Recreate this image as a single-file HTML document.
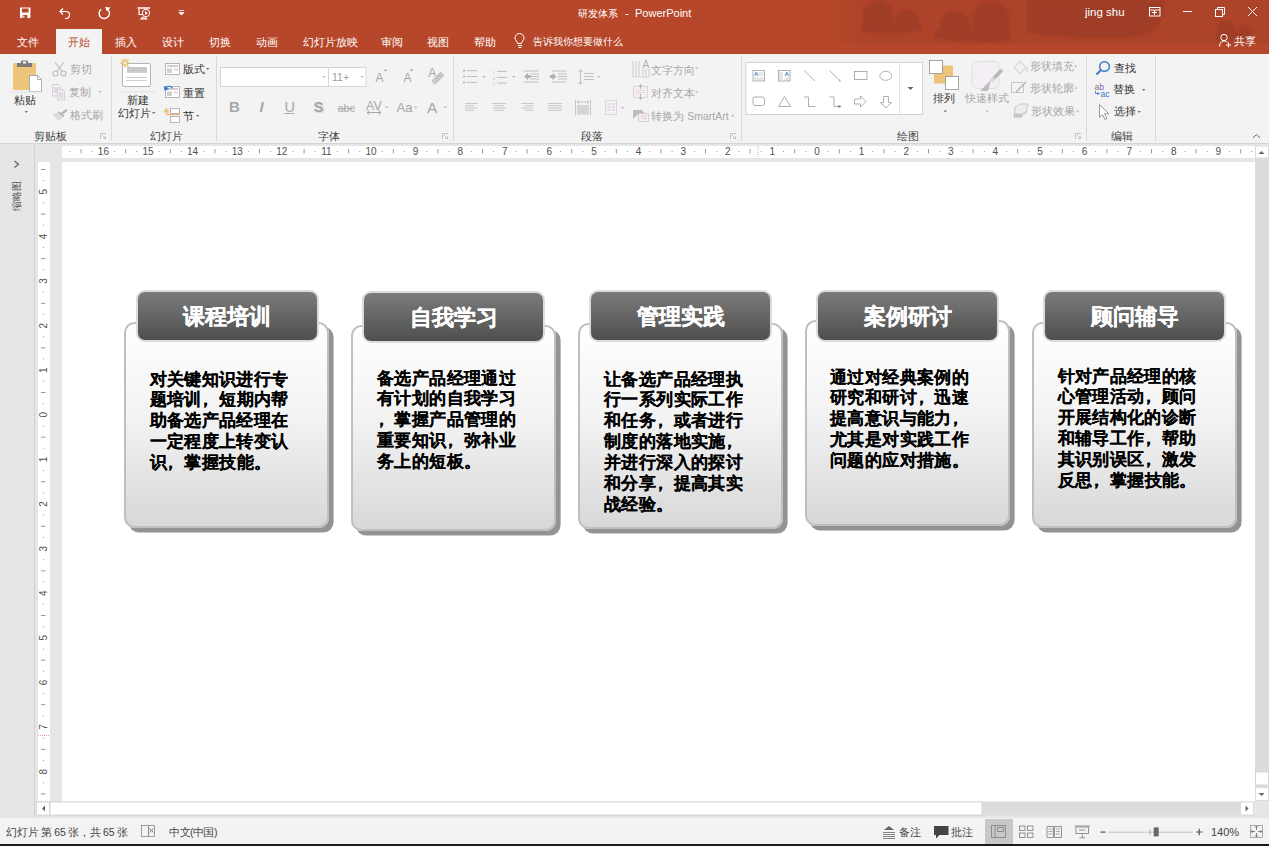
<!DOCTYPE html>
<html><head><meta charset="utf-8">
<style>
*{box-sizing:border-box;margin:0;padding:0}
html,body{width:1269px;height:846px;overflow:hidden;background:#e6e6e6;font-family:"Liberation Sans",sans-serif;}
.a{position:absolute}
.t{position:absolute;white-space:nowrap;line-height:1}
#title{left:0;top:0;width:1269px;height:54px;background:#b7472a;overflow:hidden}
#ribbon{left:0;top:54px;width:1269px;height:90px;background:#f3f3f3;border-bottom:1px solid #d5d5d5}
.w{color:#fff}
.tab{font-size:10.5px;color:#fff;top:36.8px}
.rb{font-size:10.5px;color:#444;margin-top:1.3px}
.dis{color:#a6a6a6}
.glabel{font-size:11px;color:#444;top:129px}
.sep{position:absolute;top:58px;width:1px;height:82px;background:#dadada}
/* cards */
.body{position:absolute;width:205.4px;height:206px;border-radius:10.5px;border:2.4px solid #bfbfbf;background:linear-gradient(#ffffff 0%,#f3f3f3 45%,#d8d8d8 100%);box-shadow:4.6px 4.6px 0 0 #939393}
.head{position:absolute;width:183px;height:52px;border-radius:9px;border:2.3px solid #dcdcdc;background:linear-gradient(#7b7b7b,#4f4f4f);color:#fff;font-weight:bold;font-size:22px;text-align:center;line-height:49px;-webkit-text-stroke:0.25px #fff}
.cm{position:relative;left:-4.5px}
.txt{position:absolute;font-weight:bold;font-size:17.3px;line-height:20.9px;color:#000;white-space:nowrap;-webkit-text-stroke:0.08px #000;letter-spacing:0.4px}
</style></head><body>
<!-- title bar -->
<div id="title" class="a">
<svg class="a" style="left:0;top:0" width="1269" height="54">
<defs><filter id="bl" x="-10%" y="-10%" width="120%" height="120%"><feGaussianBlur stdDeviation="1.2"/></filter><linearGradient id="tb" x1="0" x2="1"><stop offset="0" stop-color="#b7472a"/><stop offset="0.12" stop-color="#ad4329"/><stop offset="1" stop-color="#ad4329"/></linearGradient></defs>
<rect x="820" y="0" width="449" height="44" fill="url(#tb)"/>
<g fill="#a03c25" filter="url(#bl)">
<circle cx="878" cy="16" r="15"/><circle cx="907" cy="21" r="11"/><path d="M862 22h59v9c-20 2-40 2-59 1z"/>
<circle cx="955" cy="26" r="15"/><circle cx="991" cy="20" r="19"/><path d="M935 30h75v11c-25 1-55 1-75-3z"/>
<path d="M1027 0h137c2 10-2 22-10 30c-10 8-30 8-50 8c-30 0-55-1-77-6z"/><circle cx="1226" cy="30" r="9"/><circle cx="1246" cy="32" r="6.5"/><path d="M1216 31h37v9h-37z"/>
</g>
<rect x="0" y="44" width="1269" height="10" fill="#b7472a"/>
<g fill="none" stroke="#fff" stroke-width="1.2">
<path d="M20 7.5h10.4v10.6h-10.4zM21.9 8.4v4.2h6.7v-4.2zM22.6 15v3.1h4.7v-3.1z" fill="#fff" fill-rule="evenodd" stroke="none"/>
<rect x="23.2" y="15.7" width="1.2" height="1.8" fill="#fff" stroke="none"/>
<path d="M60 11.5h6a3.5 3.5 0 0 1 0 7h-1"/><path d="M63 8.5l-3 3 3 3"/>
<path d="M101.2 9.2a5.2 5.2 0 1 0 5.2 -0.6" stroke-width="1.4"/>
<path d="M137.5 8h12.5" stroke-width="1.5"/><path d="M139 9v5.5h4"/><path d="M143.5 16.8l-2.3 2h5.3l-1.8-2"/>
</g>
<circle cx="146" cy="13" r="3.7" fill="#b7472a" stroke="#fff" stroke-width="1"/><path d="M145 11l3 2-3 2z" fill="#fff"/><path d="M105 7l5.5 0.5-3.5 4z" fill="#fff"/>
<path d="M179 10.5h5M179 12.5h5l-2.5 2.5z" fill="#fff" stroke="#fff" stroke-width="0.8"/>
<g fill="none" stroke="#fff" stroke-width="1">
<rect x="1149.5" y="7.5" width="10.5" height="8.5"/><path d="M1149.5 10h10.5M1152 12.5h5M1154.5 10v5"/>
<path d="M1183 11.5h9"/>
<rect x="1215.5" y="9.5" width="7" height="7"/><path d="M1217.5 9.5v-2h7v7h-2"/>
<path d="M1248 7l9 9M1257 7l-9 9"/>
<circle cx="1224" cy="37.5" r="3.2"/><path d="M1219.5 46.5c0-3.5 2-5.5 4.5-5.5s3 1 3.5 1.5"/><path d="M1228.5 42.5v5M1226 45h5"/>
</g>
</svg>
<div class="t w" style="left:577.5px;top:8.6px;font-size:10px">研发体系</div><div class="t w" style="left:625px;top:8px;font-size:11px">-</div><div class="t w" style="left:635px;top:8px;font-size:11px">PowerPoint</div>
<div class="t w" style="left:1085px;top:6.5px;font-size:11.5px">jing shu</div>
<div class="t tab" style="left:17px">文件</div>
<div class="a" style="left:56px;top:29px;width:46px;height:25px;background:#f3f3f3"></div>
<div class="t tab" style="left:68px;color:#b7472a">开始</div>
<div class="t tab" style="left:115px">插入</div>
<div class="t tab" style="left:162px">设计</div>
<div class="t tab" style="left:209px">切换</div>
<div class="t tab" style="left:256px">动画</div>
<div class="t tab" style="left:303px">幻灯片放映</div>
<div class="t tab" style="left:381px">审阅</div>
<div class="t tab" style="left:427px">视图</div>
<div class="t tab" style="left:474px">帮助</div>
<svg class="a" style="left:513px;top:33px" width="14" height="16"><path d="M4.5 10.5c0-2-2.5-3-2.5-5.5a4.5 4.5 0 0 1 9 0c0 2.5-2.5 3.5-2.5 5.5zM5 12.5h4M5.5 14.5h3" fill="none" stroke="#fff" stroke-width="1"/></svg>
<div class="t tab" style="left:533px;font-size:10px;margin-top:0.3px">告诉我你想要做什么</div>
<div class="t tab" style="left:1234px;margin-top:-1px">共享</div>
</div>
<!-- ribbon -->
<div id="ribbon" class="a"></div>
<svg class="a" style="left:0;top:0" width="1269" height="145">
<!-- font boxes -->
<rect x="220.5" y="67.5" width="108" height="19" fill="#fff" stroke="#d6d6d6" stroke-width="1"/>
<rect x="328.5" y="67.5" width="37.5" height="19" fill="#fff" stroke="#d6d6d6" stroke-width="1"/>
<!-- separators -->
<g fill="#dadada"><rect x="111" y="56" width="1" height="85"/><rect x="216" y="56" width="1" height="85"/><rect x="453" y="56" width="1" height="85"/><rect x="741" y="56" width="1" height="85"/><rect x="1086" y="56" width="1" height="85"/><rect x="1155" y="56" width="1" height="85"/></g>
<!-- launchers -->
<g fill="none" stroke="#b5b5b5" stroke-width="0.8"><path d="M100.5 139v-5.5h5.5M102 135l3.5 3.5M103.5 138.5h2v-2"/><path d="M442.5 139v-5.5h5.5M444 135l3.5 3.5M445.5 138.5h2v-2"/><path d="M730.5 139v-5.5h5.5M732 135l3.5 3.5M733.5 138.5h2v-2"/><path d="M1075.5 139v-5.5h5.5M1077 135l3.5 3.5M1078.5 138.5h2v-2"/></g>
<!-- paste -->
<rect x="13" y="63" width="23" height="27" rx="1.5" fill="#ecc57a"/>
<path d="M17 67v-4h4v-1.5a1 1 0 0 1 1-1h5a1 1 0 0 1 1 1v1.5h4v4z" fill="#7b7b7b"/><rect x="23" y="61.5" width="3" height="2" fill="#fff"/>
<path d="M29.5 75.5h8l4 4v12h-12z" fill="#fff" stroke="#9a9a9a" stroke-width="0.8"/><path d="M37.5 75.5v4h4" fill="none" stroke="#9a9a9a" stroke-width="0.8"/>
<rect x="6" y="91.5" width="37" height="0.8" fill="#e0e0e0"/>
<!-- scissors -->
<g fill="none" stroke="#bdbdbd" stroke-width="1.1"><circle cx="55.5" cy="73.5" r="2.5"/><circle cx="63.5" cy="73.5" r="2.5"/><path d="M57 71.5l7-9.5M62 71.5l-7-9.5"/></g>
<!-- copy -->
<g fill="#f1edf1" stroke="#d0c8d0" stroke-width="0.8"><path d="M52.5 84.5h6l1.5 1.5v10h-7.5z"/><path d="M57.5 89.5h5.5l1.5 1.5v9h-7z"/></g>
<g stroke="#c8c0c8" stroke-width="0.8"><path d="M54 88h4M54 90h4M54 92h3M59 93h4M59 95h4M59 97h4"/></g>
<!-- brush -->
<path d="M52.7 114.4l6.2-2.4 4.7 4.3-5.2 4.7z" fill="#dcd8dc"/><path d="M58.9 112l4.7 4.3" stroke="#b0aeb0" stroke-width="1.6"/><path d="M61.8 113.8l4.3-3.4" stroke="#b8b6b8" stroke-width="2.4" stroke-linecap="round"/>
<!-- new slide -->
<rect x="122.5" y="63.5" width="28" height="23" rx="1.5" fill="#fff" stroke="#ababab" stroke-width="0.9"/>
<rect x="127" y="67" width="20" height="5.8" fill="#c9c9c9"/>
<path d="M126 77.5h21M126 80.5h21" stroke="#c3c3c3" stroke-width="0.8"/>
<g stroke="#ebb55a" stroke-width="1.1"><path d="M125 58v10M120 63h10M121.5 59.5l7 7M128.5 59.5l-7 7"/></g><circle cx="125" cy="63" r="2.2" fill="#f3f3f3" stroke="#ebb55a" stroke-width="1"/>
<rect x="118" y="91.5" width="37" height="0.8" fill="#e0e0e0"/>
<!-- layout icon -->
<rect x="165.5" y="63.5" width="14" height="11" fill="#fff" stroke="#a6a6a6" stroke-width="0.8"/><rect x="167" y="65" width="11" height="2" fill="#cfcfcf"/><rect x="167" y="68.5" width="5" height="4.5" fill="#cfcfcf"/><rect x="173.5" y="68.5" width="4.5" height="2" fill="#dedede"/>
<!-- reset icon -->
<rect x="165.5" y="86.5" width="14" height="11" fill="#fff" stroke="#a6a6a6" stroke-width="0.8"/><rect x="167" y="88" width="11" height="2" fill="#cfcfcf"/><rect x="167" y="91.5" width="5" height="4.5" fill="#cfcfcf"/><rect x="173.5" y="91.5" width="4.5" height="2" fill="#dedede"/>
<path d="M164.5 89.5a4.5 4 0 0 1 8 -1.5" fill="none" stroke="#3a7dc9" stroke-width="1.4"/><path d="M163.5 86l1.5 5 4-2.5z" fill="#3a7dc9"/>
<!-- section icon -->
<rect x="170.5" y="108.5" width="9" height="5" fill="#fff" stroke="#a6a6a6" stroke-width="0.8"/><rect x="170.5" y="116.5" width="9" height="6" fill="#fff" stroke="#a6a6a6" stroke-width="0.8"/>
<path d="M166 114.5h14" stroke="#f0b070" stroke-width="1.2"/><g stroke="#ebb55a" stroke-width="0.9"><path d="M166.5 108v6M163.5 111h6M164.5 109l4 4M168.5 109l-4 4"/></g>
<!-- dropdown arrows -->
<g fill="#777"><path d="M24.5 111h3.5l-1.75 2z"/><path d="M98.5 91h3.5l-1.75 2z" fill="#bbb"/><path d="M152 112h3.5l-1.75 2z"/><path d="M206 68h3.5l-1.75 2z"/><path d="M196 115h3.5l-1.75 2z"/>
<path d="M943.5 110.5h3.5l-1.75 2z"/><path d="M1142 89h3.5l-1.75 2z"/><path d="M1137.5 111h3.5l-1.75 2z"/></g>
<g fill="#bcbcbc"><path d="M322.5 76h3.5l-1.75 2z"/><path d="M360.5 76h3.5l-1.75 2z"/><path d="M385 106.5h3.5l-1.75 2z"/><path d="M414 106.5h3.5l-1.75 2z"/><path d="M443.5 106.5h3.5l-1.75 2z"/>
<path d="M482 76h3.5l-1.75 2z"/><path d="M512 76h3.5l-1.75 2z"/><path d="M597 76h3.5l-1.75 2z"/><path d="M621 107h3.5l-1.75 2z"/>
<path d="M695 67.5h3.5l-1.75 2z"/><path d="M695 91.5h3.5l-1.75 2z"/><path d="M731 115h3.5l-1.75 2z"/>
<path d="M985.5 110.5h3.5l-1.75 2z"/><path d="M1074 65.5h3.5l-1.75 2z"/><path d="M1074 87.5h3.5l-1.75 2z"/><path d="M1076 110.5h3.5l-1.75 2z"/></g>
</svg>
<!-- ribbon texts -->
<div class="t rb" style="left:14px;top:93.5px;color:#333">粘贴</div>
<div class="t rb dis" style="left:70px;top:63px">剪切</div>
<div class="t rb dis" style="left:69px;top:86px">复制</div>
<div class="t rb dis" style="left:70px;top:109px">格式刷</div>
<div class="t rb" style="left:34px;top:129.5px">剪贴板</div>
<div class="t rb" style="left:127px;top:93.5px;color:#333">新建</div>
<div class="t rb" style="left:118px;top:106.5px;color:#333">幻灯片</div>
<div class="t rb" style="left:182.5px;top:62.5px;color:#333">版式</div>
<div class="t rb" style="left:182.5px;top:86.5px;color:#333">重置</div>
<div class="t rb" style="left:182.5px;top:109.5px;color:#333">节</div>
<div class="t rb" style="left:149.5px;top:129.5px">幻灯片</div>
<div class="t rb" style="left:318px;top:129.5px">字体</div>
<div class="t rb" style="left:581px;top:129.5px">段落</div>
<div class="t rb" style="left:897px;top:129.5px">绘图</div>
<div class="t rb" style="left:1110.5px;top:129.5px">编辑</div>


<!-- ribbon part 2 -->
<svg class="a" style="left:0;top:0" width="1269" height="145">
<!-- font group -->
<g fill="#a6a6a6" font-family="Liberation Sans" >
<text x="229" y="112" font-size="15" font-weight="bold">B</text>
<text x="259.5" y="112" font-size="15" font-style="italic" font-weight="bold">I</text>
<text x="284.5" y="112" font-size="14.5">U</text><rect x="284.5" y="113" width="10" height="0.9"/>
<text x="314.5" y="113" font-size="15" font-weight="bold" fill="#d6d6d6">S</text><text x="313.5" y="112" font-size="15" font-weight="bold">S</text>
<text x="337.5" y="112" font-size="11">abc</text><rect x="337.5" y="108.3" width="17" height="0.9"/>
<text x="366" y="110" font-size="12.5">AV</text>
<text x="396.5" y="112" font-size="13">Aa</text>
<text x="427" y="112.6" font-size="15.5">A</text>
<text x="375.5" y="82" font-size="12">A</text><path d="M383.5 71l2-2 2 2z"/>
<text x="403.5" y="82" font-size="12">A</text><path d="M409.5 69.5h4l-2 2z"/>
<text x="428.3" y="77.3" font-size="12">A</text>
<text x="332" y="80.7" font-size="10.5" fill="#a0a0a0">11+</text>
</g>
<path d="M367 112.5h14M369.5 110.5l-2.5 2 2.5 2M378.5 110.5l2.5 2-2.5 2" fill="none" stroke="#a6a6a6" stroke-width="1"/>
<path d="M440.5 71.3l4.3 4.2-9.8 9.7-4.2-4.2z" fill="#c6c4c6" stroke="#f3f3f3" stroke-width="0.8"/><path d="M432.7 79.2l4 3.6" stroke="#e2e0e2" stroke-width="0.8"/>
<!-- paragraph group -->
<g fill="#b0b0b0"><circle cx="464" cy="70.7" r="1"/><circle cx="464" cy="76.5" r="1"/><circle cx="464" cy="82.4" r="1"/></g>
<g stroke="#b8b8b8" stroke-width="0.9"><path d="M466.5 70.7h10.5M466.5 76.5h10.5M466.5 82.4h10.5"/><path d="M497 71.4h10M497 77.4h10M497 83.1h10"/></g>
<g fill="#b0b0b0" font-family="Liberation Serif" font-size="5"><text x="492.5" y="73.5">1</text><text x="492.5" y="79.5">2</text><text x="492.5" y="85.2">3</text></g>
<g stroke="#bcbcbc" stroke-width="0.9" fill="none"><path d="M523.5 71h15M530 74h9M530 76.5h9M530 79h9M523.5 82h15"/><path d="M551.5 71h15M558 74h9M558 76.5h9M558 79h9M551.5 82h15"/>
<path d="M580.5 70v14M578.5 72l2-2.5 2 2.5M578.5 82l2 2.5 2-2.5M584 73.5h10M584 76.5h10M584 79.5h10"/></g>
<path d="M524 76.5l4-3.5v2h2.5v3h-2.5v2z" fill="#b0b0b0"/><path d="M556.5 76.5l-4-3.5v2h-2.5v3h2.5v2z" fill="#b0b0b0"/>
<g stroke="#c3c3c3" stroke-width="0.9"><path d="M465 103.5h12.5M465 105.8h9M465 108.1h12.5M465 110.4h9"/><path d="M492 103.5h14M494 105.8h10M492 108.1h14M494 110.4h10"/><path d="M521 103.5h12.5M524.5 105.8h9M521 108.1h12.5M524.5 110.4h9"/><path d="M548 103.5h14M548 105.8h14M548 108.1h14M548 110.4h14"/></g>
<g stroke="#c0c0c0" stroke-width="0.9" fill="none"><path d="M575.5 100v15.5M590.5 100v15.5M577 102h12M579 100.5l-2 1.5 2 1.5M587 100.5l2 1.5-2 1.5"/></g>
<rect x="577" y="105" width="12" height="9.5" fill="#d5d5d5"/>
<rect x="605.5" y="100.5" width="11" height="14" fill="#f5f0f5" stroke="#d8d0d8" stroke-width="0.8"/><path d="M607.5 104h3M612 104h3M607.5 107h3M612 107h3M607.5 110h3M612 110h3" stroke="#cfc8cf" stroke-width="1.2"/>
<g stroke="#bdbdbd" stroke-width="0.7" fill="none"><path d="M633 61v16M636 61v16M639 61v16M643 68.5v8.5M646 68.5v8.5M649 68.5v8.5"/><path d="M632.5 77h17" stroke-dasharray="1.2 1.2" stroke-width="0.9"/></g>
<text x="642.5" y="68" font-size="10" fill="#b0b0b0" font-family="Liberation Sans">A</text>
<rect x="633.5" y="86.5" width="14" height="11" fill="#f5eff5" stroke="#d6cdd6" stroke-width="0.8"/><path d="M636 90.5h9M636 92.5h9" stroke="#dcd2dc" stroke-width="0.9"/><path d="M640.5 84.5v4.5M640.5 94v5.5M638.6 86.5l1.9-2 1.9 2M638.6 97.3l1.9 2 1.9-2" fill="none" stroke="#b0b0b0" stroke-width="0.9"/>
<path d="M633 110h9l4 5h-9l-4 4z" fill="#bdbdbd"/><rect x="638.5" y="113.5" width="10" height="8" fill="#f5eff5" stroke="#d0c8d0" stroke-width="0.8"/><path d="M641 116h6M641 118.5h6" stroke="#d0c8d0" stroke-width="0.8"/>
<!-- drawing gallery -->
<rect x="746" y="62.5" width="176.5" height="52" fill="#fff" stroke="#d4d4d4" stroke-width="1"/>
<rect x="899" y="63" width="0.9" height="51" fill="#e4e4e4"/><path d="M907.5 87h6l-3 3z" fill="#666"/>
<g fill="none" stroke="#9c9c9c" stroke-width="0.8">
<rect x="753" y="70.5" width="11.5" height="10.5" stroke="#a0a0a0"/><rect x="778.5" y="70.5" width="11.5" height="10.5"/>
<path d="M804 70.5l11 10.5M829.5 70.5l11 10.5"/>
<rect x="854.5" y="71.5" width="12.5" height="8"/><ellipse cx="885.8" cy="75.8" rx="6" ry="4.5"/>
<rect x="753" y="97" width="11.5" height="8.5" rx="2"/><path d="M784.5 96.5l-6 10h12z"/>
<path d="M804 97h4.5v9.5h7M829.5 97h4.5v9.5h6.5"/>
<path d="M854.5 99h6v-3l5.5 5.5-5.5 5.5v-3h-6z"/><path d="M883.5 96.5v6h-3l5.5 5.5 5.5-5.5h-3v-6z"/>
</g>
<g fill="#777"><path d="M838.5 80l2.5 1.2-1.2 0.3z"/><path d="M838.5 105l3 1.5-3 1.5z"/></g>
<g fill="#3f7fd0" font-family="Liberation Sans" font-weight="bold" font-size="6"><text x="754" y="76">A</text><text x="784.5" y="76">A</text></g>
<g stroke="#c8c8c8" stroke-width="0.9"><path d="M758.5 73h5M758.5 75h5M754 78h10M754 80h10M780 72v8M782 72v8M784.5 78h5M784.5 80h5"/></g>
<!-- arrange -->
<rect x="934" y="65.5" width="19" height="18" fill="#edc47a"/>
<rect x="929.5" y="60.5" width="13" height="13" fill="#fff" stroke="#8f8f8f" stroke-width="0.8"/>
<rect x="945.5" y="76.5" width="13" height="13" fill="#fff" stroke="#8f8f8f" stroke-width="0.8"/>
<!-- quick styles -->
<rect x="972" y="61.5" width="27" height="27" rx="5" fill="#f3eff4" stroke="#ddd5de" stroke-width="0.8"/>
<path d="M1002 70l-8 8" stroke="#b9b9b9" stroke-width="3.5"/><path d="M994 78l-3 3" stroke="#d8d4d8" stroke-width="3.5"/><path d="M991 80l-11 11h8z" fill="#bdbdbd"/>
<!-- shape fill/outline/effect -->
<g fill="none" stroke="#c0c0c0" stroke-width="0.9"><path d="M1020 61.5l6 6-6 6-6-6z"/><path d="M1027 67v5"/><path d="M1011.5 82.5h12M1011.5 82.5v10h12v-8"/></g>
<path d="M1026 82l-10 10" stroke="#b5b5b5" stroke-width="1.4"/>
<path d="M1015 107l5-3h8l-2 9-5 4h-7z" fill="#f0ebf0" stroke="#c0bcc0" stroke-width="0.8"/><path d="M1014 114h8l5-3" fill="none" stroke="#c0bcc0" stroke-width="0.8"/><path d="M1014 114h8v3.5h-8z" fill="#c6c6c6"/>
<!-- edit -->
<circle cx="1104.5" cy="66.5" r="4.8" fill="none" stroke="#3b7bc8" stroke-width="1.5"/><path d="M1101 70l-4.5 4.5" stroke="#3b7bc8" stroke-width="2"/>
<g font-family="Liberation Sans" font-size="8.5"><text x="1094.5" y="89.8" fill="#7b7b7b">a</text><text x="1099.3" y="89.8" fill="#8e54b8">b</text><text x="1100.5" y="96.5" fill="#3b7bc8">ac</text></g>
<path d="M1095.5 91v2.5h3.5M1097.5 92l1.5 1.5-1.5 1.5" fill="none" stroke="#3b7bc8" stroke-width="0.9"/>
<path d="M1099.5 104.5v13l3-3 2.5 5 2-1-2.5-4.8h4.2z" fill="#fff" stroke="#808080" stroke-width="0.8"/>
<path d="M1253 138l3.5-3.5 3.5 3.5" fill="none" stroke="#666" stroke-width="1"/>
</svg>
<div class="t rb dis" style="left:651.3px;top:63.3px">文字方向</div>
<div class="t rb dis" style="left:651.3px;top:86.4px">对齐文本</div>
<div class="t rb dis" style="left:651.3px;top:110px">转换为 SmartArt</div>
<div class="t rb" style="left:933.4px;top:92.2px;color:#333">排列</div>
<div class="t rb dis" style="left:965px;top:92.2px">快速样式</div>
<div class="t rb dis" style="left:1029.8px;top:60px">形状填充</div>
<div class="t rb dis" style="left:1029.8px;top:82.1px">形状轮廓</div>
<div class="t rb dis" style="left:1031.2px;top:104.9px">形状效果</div>
<div class="t rb" style="left:1114px;top:61.7px;color:#333">查找</div>
<div class="t rb" style="left:1113px;top:83px;color:#333">替换</div>
<div class="t rb" style="left:1114px;top:105px;color:#333">选择</div>
<!-- left pane -->
<div class="a" style="left:0;top:144px;width:1269px;height:674px;background:#e6e6e6"></div>
<div class="a" style="left:34px;top:144px;width:1px;height:674px;background:#d2d2d2"></div>
<div class="a" style="left:62px;top:146px;width:1193px;height:12.2px;background:#fff"></div>
<div class="a" style="left:37.7px;top:162px;width:12.3px;height:639px;background:#fff"></div>
<div class="a" style="left:62px;top:162px;width:1193px;height:639.5px;background:#fff"></div>
<svg class="a" style="left:0;top:0" width="1269" height="846">
<g font-family="Liberation Sans" font-size="10" fill="#505050">
<rect x="69.4" y="151" width="1" height="1" fill="#999"/>
<rect x="80.6" y="149" width="1" height="4.5" fill="#999"/>
<rect x="91.7" y="151" width="1" height="1" fill="#999"/>
<text x="103.4" y="155" text-anchor="middle">16</text>
<rect x="114.0" y="151" width="1" height="1" fill="#999"/>
<rect x="125.2" y="149" width="1" height="4.5" fill="#999"/>
<rect x="136.3" y="151" width="1" height="1" fill="#999"/>
<text x="148.0" y="155" text-anchor="middle">15</text>
<rect x="158.7" y="151" width="1" height="1" fill="#999"/>
<rect x="169.8" y="149" width="1" height="4.5" fill="#999"/>
<rect x="180.9" y="151" width="1" height="1" fill="#999"/>
<text x="192.6" y="155" text-anchor="middle">14</text>
<rect x="203.3" y="151" width="1" height="1" fill="#999"/>
<rect x="214.4" y="149" width="1" height="4.5" fill="#999"/>
<rect x="225.6" y="151" width="1" height="1" fill="#999"/>
<text x="237.2" y="155" text-anchor="middle">13</text>
<rect x="247.8" y="151" width="1" height="1" fill="#999"/>
<rect x="259.0" y="149" width="1" height="4.5" fill="#999"/>
<rect x="270.1" y="151" width="1" height="1" fill="#999"/>
<text x="281.8" y="155" text-anchor="middle">12</text>
<rect x="292.4" y="151" width="1" height="1" fill="#999"/>
<rect x="303.6" y="149" width="1" height="4.5" fill="#999"/>
<rect x="314.7" y="151" width="1" height="1" fill="#999"/>
<text x="326.4" y="155" text-anchor="middle">11</text>
<rect x="337.0" y="151" width="1" height="1" fill="#999"/>
<rect x="348.2" y="149" width="1" height="4.5" fill="#999"/>
<rect x="359.3" y="151" width="1" height="1" fill="#999"/>
<text x="371.0" y="155" text-anchor="middle">10</text>
<rect x="381.6" y="151" width="1" height="1" fill="#999"/>
<rect x="392.8" y="149" width="1" height="4.5" fill="#999"/>
<rect x="403.9" y="151" width="1" height="1" fill="#999"/>
<text x="415.6" y="155" text-anchor="middle">9</text>
<rect x="426.2" y="151" width="1" height="1" fill="#999"/>
<rect x="437.4" y="149" width="1" height="4.5" fill="#999"/>
<rect x="448.5" y="151" width="1" height="1" fill="#999"/>
<text x="460.2" y="155" text-anchor="middle">8</text>
<rect x="470.8" y="151" width="1" height="1" fill="#999"/>
<rect x="482.0" y="149" width="1" height="4.5" fill="#999"/>
<rect x="493.1" y="151" width="1" height="1" fill="#999"/>
<text x="504.8" y="155" text-anchor="middle">7</text>
<rect x="515.5" y="151" width="1" height="1" fill="#999"/>
<rect x="526.6" y="149" width="1" height="4.5" fill="#999"/>
<rect x="537.8" y="151" width="1" height="1" fill="#999"/>
<text x="549.4" y="155" text-anchor="middle">6</text>
<rect x="560.0" y="151" width="1" height="1" fill="#999"/>
<rect x="571.2" y="149" width="1" height="4.5" fill="#999"/>
<rect x="582.4" y="151" width="1" height="1" fill="#999"/>
<text x="594.0" y="155" text-anchor="middle">5</text>
<rect x="604.6" y="151" width="1" height="1" fill="#999"/>
<rect x="615.8" y="149" width="1" height="4.5" fill="#999"/>
<rect x="627.0" y="151" width="1" height="1" fill="#999"/>
<text x="638.6" y="155" text-anchor="middle">4</text>
<rect x="649.2" y="151" width="1" height="1" fill="#999"/>
<rect x="660.4" y="149" width="1" height="4.5" fill="#999"/>
<rect x="671.6" y="151" width="1" height="1" fill="#999"/>
<text x="683.2" y="155" text-anchor="middle">3</text>
<rect x="693.9" y="151" width="1" height="1" fill="#999"/>
<rect x="705.0" y="149" width="1" height="4.5" fill="#999"/>
<rect x="716.2" y="151" width="1" height="1" fill="#999"/>
<text x="727.8" y="155" text-anchor="middle">2</text>
<rect x="738.4" y="151" width="1" height="1" fill="#999"/>
<rect x="749.6" y="149" width="1" height="4.5" fill="#999"/>
<rect x="760.8" y="151" width="1" height="1" fill="#999"/>
<text x="772.4" y="155" text-anchor="middle">1</text>
<rect x="783.0" y="151" width="1" height="1" fill="#999"/>
<rect x="794.2" y="149" width="1" height="4.5" fill="#999"/>
<rect x="805.4" y="151" width="1" height="1" fill="#999"/>
<text x="817.0" y="155" text-anchor="middle">0</text>
<rect x="827.6" y="151" width="1" height="1" fill="#999"/>
<rect x="838.8" y="149" width="1" height="4.5" fill="#999"/>
<rect x="850.0" y="151" width="1" height="1" fill="#999"/>
<text x="861.6" y="155" text-anchor="middle">1</text>
<rect x="872.2" y="151" width="1" height="1" fill="#999"/>
<rect x="883.4" y="149" width="1" height="4.5" fill="#999"/>
<rect x="894.6" y="151" width="1" height="1" fill="#999"/>
<text x="906.2" y="155" text-anchor="middle">2</text>
<rect x="916.9" y="151" width="1" height="1" fill="#999"/>
<rect x="928.0" y="149" width="1" height="4.5" fill="#999"/>
<rect x="939.2" y="151" width="1" height="1" fill="#999"/>
<text x="950.8" y="155" text-anchor="middle">3</text>
<rect x="961.4" y="151" width="1" height="1" fill="#999"/>
<rect x="972.6" y="149" width="1" height="4.5" fill="#999"/>
<rect x="983.8" y="151" width="1" height="1" fill="#999"/>
<text x="995.4" y="155" text-anchor="middle">4</text>
<rect x="1006.0" y="151" width="1" height="1" fill="#999"/>
<rect x="1017.2" y="149" width="1" height="4.5" fill="#999"/>
<rect x="1028.3" y="151" width="1" height="1" fill="#999"/>
<text x="1040.0" y="155" text-anchor="middle">5</text>
<rect x="1050.7" y="151" width="1" height="1" fill="#999"/>
<rect x="1061.8" y="149" width="1" height="4.5" fill="#999"/>
<rect x="1073.0" y="151" width="1" height="1" fill="#999"/>
<text x="1084.6" y="155" text-anchor="middle">6</text>
<rect x="1095.2" y="151" width="1" height="1" fill="#999"/>
<rect x="1106.4" y="149" width="1" height="4.5" fill="#999"/>
<rect x="1117.5" y="151" width="1" height="1" fill="#999"/>
<text x="1129.2" y="155" text-anchor="middle">7</text>
<rect x="1139.9" y="151" width="1" height="1" fill="#999"/>
<rect x="1151.0" y="149" width="1" height="4.5" fill="#999"/>
<rect x="1162.2" y="151" width="1" height="1" fill="#999"/>
<text x="1173.8" y="155" text-anchor="middle">8</text>
<rect x="1184.5" y="151" width="1" height="1" fill="#999"/>
<rect x="1195.6" y="149" width="1" height="4.5" fill="#999"/>
<rect x="1206.8" y="151" width="1" height="1" fill="#999"/>
<text x="1218.4" y="155" text-anchor="middle">9</text>
<rect x="1229.1" y="151" width="1" height="1" fill="#999"/>
<rect x="1240.2" y="149" width="1" height="4.5" fill="#999"/>
<rect x="1251.4" y="151" width="1" height="1" fill="#999"/>
<rect x="41" y="169.0" width="4.5" height="1" fill="#999"/>
<rect x="43" y="180.1" width="1" height="1" fill="#999"/>
<text x="0" y="0" text-anchor="middle" transform="translate(47.3 191.8) rotate(-90)">5</text>
<rect x="43" y="202.4" width="1" height="1" fill="#999"/>
<rect x="41" y="213.6" width="4.5" height="1" fill="#999"/>
<rect x="43" y="224.7" width="1" height="1" fill="#999"/>
<text x="0" y="0" text-anchor="middle" transform="translate(47.3 236.4) rotate(-90)">4</text>
<rect x="43" y="247.0" width="1" height="1" fill="#999"/>
<rect x="41" y="258.2" width="4.5" height="1" fill="#999"/>
<rect x="43" y="269.4" width="1" height="1" fill="#999"/>
<text x="0" y="0" text-anchor="middle" transform="translate(47.3 281.0) rotate(-90)">3</text>
<rect x="43" y="291.6" width="1" height="1" fill="#999"/>
<rect x="41" y="302.8" width="4.5" height="1" fill="#999"/>
<rect x="43" y="313.9" width="1" height="1" fill="#999"/>
<text x="0" y="0" text-anchor="middle" transform="translate(47.3 325.6) rotate(-90)">2</text>
<rect x="43" y="336.2" width="1" height="1" fill="#999"/>
<rect x="41" y="347.4" width="4.5" height="1" fill="#999"/>
<rect x="43" y="358.5" width="1" height="1" fill="#999"/>
<text x="0" y="0" text-anchor="middle" transform="translate(47.3 370.2) rotate(-90)">1</text>
<rect x="43" y="380.8" width="1" height="1" fill="#999"/>
<rect x="41" y="392.0" width="4.5" height="1" fill="#999"/>
<rect x="43" y="403.1" width="1" height="1" fill="#999"/>
<text x="0" y="0" text-anchor="middle" transform="translate(47.3 414.8) rotate(-90)">0</text>
<rect x="43" y="425.4" width="1" height="1" fill="#999"/>
<rect x="41" y="436.6" width="4.5" height="1" fill="#999"/>
<rect x="43" y="447.7" width="1" height="1" fill="#999"/>
<text x="0" y="0" text-anchor="middle" transform="translate(47.3 459.4) rotate(-90)">1</text>
<rect x="43" y="470.0" width="1" height="1" fill="#999"/>
<rect x="41" y="481.2" width="4.5" height="1" fill="#999"/>
<rect x="43" y="492.4" width="1" height="1" fill="#999"/>
<text x="0" y="0" text-anchor="middle" transform="translate(47.3 504.0) rotate(-90)">2</text>
<rect x="43" y="514.6" width="1" height="1" fill="#999"/>
<rect x="41" y="525.8" width="4.5" height="1" fill="#999"/>
<rect x="43" y="537.0" width="1" height="1" fill="#999"/>
<text x="0" y="0" text-anchor="middle" transform="translate(47.3 548.6) rotate(-90)">3</text>
<rect x="43" y="559.2" width="1" height="1" fill="#999"/>
<rect x="41" y="570.4" width="4.5" height="1" fill="#999"/>
<rect x="43" y="581.6" width="1" height="1" fill="#999"/>
<text x="0" y="0" text-anchor="middle" transform="translate(47.3 593.2) rotate(-90)">4</text>
<rect x="43" y="603.8" width="1" height="1" fill="#999"/>
<rect x="41" y="615.0" width="4.5" height="1" fill="#999"/>
<rect x="43" y="626.2" width="1" height="1" fill="#999"/>
<text x="0" y="0" text-anchor="middle" transform="translate(47.3 637.8) rotate(-90)">5</text>
<rect x="43" y="648.5" width="1" height="1" fill="#999"/>
<rect x="41" y="659.6" width="4.5" height="1" fill="#999"/>
<rect x="43" y="670.8" width="1" height="1" fill="#999"/>
<text x="0" y="0" text-anchor="middle" transform="translate(47.3 682.4) rotate(-90)">6</text>
<rect x="43" y="693.0" width="1" height="1" fill="#999"/>
<rect x="41" y="704.2" width="4.5" height="1" fill="#999"/>
<rect x="43" y="715.4" width="1" height="1" fill="#999"/>
<text x="0" y="0" text-anchor="middle" transform="translate(47.3 727.0) rotate(-90)">7</text>
<rect x="43" y="737.6" width="1" height="1" fill="#999"/>
<rect x="41" y="748.8" width="4.5" height="1" fill="#999"/>
<rect x="43" y="760.0" width="1" height="1" fill="#999"/>
<text x="0" y="0" text-anchor="middle" transform="translate(47.3 771.6) rotate(-90)">8</text>
<rect x="43" y="782.2" width="1" height="1" fill="#999"/>
<rect x="41" y="793.4" width="4.5" height="1" fill="#999"/>
</g>
<path d="M758 146v12" stroke="#e07a60" stroke-width="1" stroke-dasharray="1 1" opacity="0.7"/>
<path d="M38 735.5h12" stroke="#e07a60" stroke-width="1" stroke-dasharray="1 1" opacity="0.7"/>
<path d="M14.5 161l4 3.3-4 3.3" fill="none" stroke="#666" stroke-width="1.3"/>
<!-- v scrollbar -->
<rect x="1255" y="146" width="14" height="655" fill="#dcdcdc"/>
<rect x="1255.5" y="146" width="13" height="12" fill="#fff" stroke="#d6d6d6" stroke-width="0.8"/>
<path d="M1258.5 154h6l-3-3z" fill="#666"/>
<rect x="1255.5" y="772" width="13" height="13" fill="#fff" stroke="#d0d0d0" stroke-width="0.8"/>
<rect x="1255.5" y="787.5" width="13" height="13" fill="#fff" stroke="#d6d6d6" stroke-width="0.8"/>
<path d="M1258.5 793h6l-3 3z" fill="#666"/>
<!-- h scrollbar -->
<rect x="36" y="801.5" width="1219" height="14" fill="#dcdcdc"/>
<rect x="36.5" y="802" width="13" height="13" fill="#fff" stroke="#d6d6d6" stroke-width="0.8"/>
<path d="M45 805.5v6l-3-3z" fill="#666"/>
<rect x="50" y="802" width="932" height="13" fill="#fff" stroke="#d0d0d0" stroke-width="0.8"/>
<rect x="1240.5" y="802" width="13" height="13" fill="#fff" stroke="#d6d6d6" stroke-width="0.8"/>
<path d="M1245.5 805.5v6l3-3z" fill="#666"/>
<rect x="1254" y="801" width="15" height="16" fill="#e6e6e6"/>
</svg>
<div class="t" style="left:12px;top:178px;width:10px;height:36px"><div style="position:absolute;left:-13px;top:13px;width:36px;height:10px;font-size:9.5px;line-height:10px;color:#555;transform:rotate(-90deg);text-align:center">缩略图</div></div>
<!-- status bar -->
<div class="a" style="left:0;top:817.5px;width:1269px;height:27px;background:#f3f3f3"></div>
<div class="a" style="left:0;top:844px;width:1269px;height:2px;background:#1a1a1a"></div>
<div class="a" style="left:985.4px;top:819px;width:27.2px;height:25px;background:#c8c8c8"></div>
<div class="t rb" style="left:6px;top:825.5px;color:#444;letter-spacing:-0.25px">幻灯片 第 65 张，共 65 张</div>
<div class="t rb" style="left:169px;top:825.5px;color:#444;letter-spacing:-0.5px">中文(中国)</div>
<div class="t rb" style="left:899px;top:825.5px;color:#444">备注</div>
<div class="t rb" style="left:951px;top:825.5px;color:#444">批注</div>
<div class="t rb" style="left:1211px;top:826px;color:#444;font-size:11px">140%</div>
<svg class="a" style="left:0;top:810px" width="1269" height="36">
<g fill="none" stroke="#8a8a8a" stroke-width="0.8"><rect x="141.5" y="15.5" width="7" height="11"/><rect x="148.5" y="15.5" width="6" height="11"/></g>
<path d="M149.5 18.5l4 4M153.5 18.5l-4 4" stroke="#666" stroke-width="0.9"/>
<path d="M884 20l5-4 5 4z" fill="#666"/><path d="M883 22.5h12M883 24.5h12M883 26.5h12M883 28.5h12" stroke="#777" stroke-width="0.9"/>
<path d="M934 16h14.5v9h-9l-3.5 3.5v-3.5h-2z" fill="#444"/>
<g fill="none" stroke="#888" stroke-width="0.9"><rect x="991.5" y="15.5" width="14" height="12"/><path d="M995 15.5v12"/><rect x="997.5" y="17.5" width="6" height="4"/></g>
<g fill="none" stroke="#888" stroke-width="0.9"><rect x="1019.5" y="16" width="5.5" height="4.5"/><rect x="1027.5" y="16" width="5.5" height="4.5"/><rect x="1019.5" y="23" width="5.5" height="4.5"/><rect x="1027.5" y="23" width="5.5" height="4.5"/></g>
<g fill="none" stroke="#888" stroke-width="0.9"><path d="M1047 16.5h6.5v11h-6.5zM1054.5 16.5h7v11h-7z"/><path d="M1048.5 19h4M1048.5 21.5h4M1048.5 24h4M1056 19h4M1056 21.5h4M1056 24h4" stroke-width="0.7"/></g>
<g fill="none" stroke="#888" stroke-width="0.9"><path d="M1074.5 16h15.5"/><rect x="1076" y="17" width="12.5" height="6.5"/><path d="M1082.3 23.5v4M1079.5 27.8h5.5"/><path d="M1079 20h6"/></g>
<rect x="1100.5" y="21.5" width="5" height="1.2" fill="#555"/>
<rect x="1108.8" y="21.7" width="84" height="1" fill="#c4c4c4"/>
<rect x="1149.5" y="19.5" width="1" height="5" fill="#aaa"/>
<rect x="1153.7" y="17.4" width="5" height="9" fill="#666"/>
<path d="M1196 22h6.5M1199.25 18.7v6.6" stroke="#555" stroke-width="1.2"/>
<g fill="none" stroke="#999" stroke-width="0.8"><rect x="1250.5" y="15.5" width="12" height="12"/></g>
<g fill="none" stroke="#666" stroke-width="0.8"><path d="M1256.5 16v4M1255 17.5l1.5-1.5 1.5 1.5M1256.5 27v-4M1255 25.5l1.5 1.5 1.5-1.5M1251 21.5h4M1252.5 20l-1.5 1.5 1.5 1.5M1262 21.5h-4M1260.5 20l1.5 1.5-1.5 1.5"/></g>
</svg>
<!-- cards -->
<div id="cards">
<div class="body" style="left:123.9px;top:321.5px"></div>
<div class="head" style="left:135.6px;top:290.3px">课程培训</div>
<div class="txt" style="left:149.5px;top:368.5px">对关键知识进行专<br>题培训<span class="cm">，</span>短期内帮<br>助备选产品经理在<br>一定程度上转变认<br>识<span class="cm">，</span>掌握技能。</div>

<div class="body" style="left:350.9px;top:324.5px"></div>
<div class="head" style="left:362.4px;top:291px">自我学习</div>
<div class="txt" style="left:377px;top:367.5px">备选产品经理通过<br>有计划的自我学习<br><span class="cm">，</span>掌握产品管理的<br>重要知识<span class="cm">，</span>弥补业<br>务上的短板。</div>

<div class="body" style="left:577.8px;top:322.8px"></div>
<div class="head" style="left:589.2px;top:290.3px">管理实践</div>
<div class="txt" style="left:604px;top:368.5px">让备选产品经理执<br>行一系列实际工作<br>和任务<span class="cm">，</span>或者进行<br>制度的落地实施<span class="cm">，</span><br>并进行深入的探讨<br>和分享<span class="cm">，</span>提高其实<br>战经验。</div>

<div class="body" style="left:804.8px;top:320.0px"></div>
<div class="head" style="left:816.3px;top:290.3px">案例研讨</div>
<div class="txt" style="left:830px;top:366.5px">通过对经典案例的<br>研究和研讨<span class="cm">，</span>迅速<br>提高意识与能力<span class="cm">，</span><br>尤其是对实践工作<br>问题的应对措施。</div>

<div class="body" style="left:1031.7px;top:321.7px"></div>
<div class="head" style="left:1043px;top:289.6px">顾问辅导</div>
<div class="txt" style="left:1057.5px;top:365.5px">针对产品经理的核<br>心管理活动<span class="cm">，</span>顾问<br>开展结构化的诊断<br>和辅导工作<span class="cm">，</span>帮助<br>其识别误区<span class="cm">，</span>激发<br>反思<span class="cm">，</span>掌握技能。</div>
</div>
</body></html>
